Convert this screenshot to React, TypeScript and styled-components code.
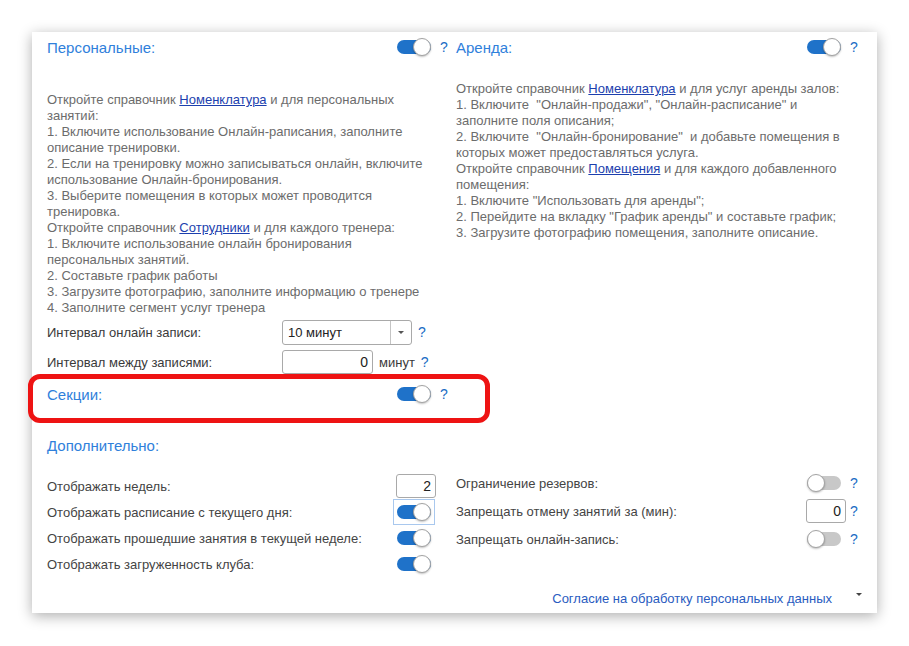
import React from "react";
import styled, { createGlobalStyle, css } from "styled-components";

const Global = createGlobalStyle`
  html, body { margin: 0; padding: 0; background: #ffffff; }
  body { font-family: "Liberation Sans", Arial, sans-serif; }
  * { box-sizing: border-box; }
`;

const Page = styled.div`
  padding: 32px 0 0 32px;
  width: 909px;
  height: 646px;
`;

const Card = styled.div`
  width: 845px;
  height: 581px;
  background: #fff;
  padding: 0 15px;
  box-shadow: 0 3px 13px rgba(0, 0, 0, 0.32);
  display: flex;
  flex-direction: column;
`;

const Columns = styled.div<{ $pad?: number }>`
  display: grid;
  grid-template-columns: 405px 406px;
  column-gap: 4px;
  align-items: start;
`;

const Column = styled.div<{ $padTop?: number }>`
  display: flex;
  flex-direction: column;
  padding-top: ${(p) => p.$padTop ?? 0}px;
`;

const HeaderRow = styled.div<{ $mt?: number; $highlight?: boolean }>`
  display: flex;
  align-items: center;
  height: 30px;
  margin-top: ${(p) => p.$mt ?? 0}px;
  position: relative;
  ${(p) =>
    p.$highlight &&
    css`
      &::before {
        content: "";
        position: absolute;
        left: -19px;
        right: -38px;
        top: -5px;
        bottom: -14px;
        border: 5px solid #ee1313;
        border-radius: 12px;
        pointer-events: none;
      }
    `}
`;

const Title = styled.div`
  flex: 1;
  font-size: 15px;
  color: #2f80db;
`;

const Desc = styled.div<{ $mt: number }>`
  margin-top: ${(p) => p.$mt}px;
  font-size: 13px;
  line-height: 16px;
  color: #6c6c6c;
`;

const Link = styled.a`
  color: #1c3fae;
  text-decoration: underline;
`;

const ControlSlot = styled.div`
  width: 40px;
  display: flex;
  align-items: center;
`;

const Help = styled.div`
  width: 16px;
  text-align: center;
  font-size: 14px;
  color: #1a6cc4;
`;

const ToggleBox = styled.div<{ $focus?: boolean }>`
  position: relative;
  width: 34px;
  height: 18px;
  margin-left: 1px;
  ${(p) =>
    p.$focus &&
    css`
      outline: 1px solid #a9c8ee;
      outline-offset: 3px;
    `}
`;

const Track = styled.div<{ $on: boolean }>`
  position: absolute;
  left: 0;
  right: 0;
  top: 2px;
  height: 14px;
  border-radius: 7px;
  background: ${(p) => (p.$on ? "#1f72c9" : "#c8c8c8")};
`;

const Knob = styled.div<{ $on: boolean }>`
  position: absolute;
  top: 0;
  ${(p) => (p.$on ? "right: 0;" : "left: 0;")}
  width: 18px;
  height: 18px;
  border-radius: 50%;
  background: #fff;
  border: 1px solid #a3a3a3;
  box-shadow: 0 1px 2px rgba(0, 0, 0, 0.25);
`;

const Toggle = ({ on, focus }: { on: boolean; focus?: boolean }) => (
  <ToggleBox $focus={focus}>
    <Track $on={on} />
    <Knob $on={on} />
  </ToggleBox>
);

const FieldRow = styled.div<{ $mt?: number }>`
  display: flex;
  align-items: center;
  height: 30px;
  margin-top: ${(p) => p.$mt ?? 0}px;
`;

const FieldLabel = styled.div`
  width: 235px;
  font-size: 13px;
  color: #3a3a3a;
`;

const Select = styled.div`
  width: 130px;
  height: 25px;
  border: 1px solid #a9a9a9;
  border-radius: 3px;
  display: flex;
  align-items: stretch;
  font-size: 13px;
  color: #222;
`;

const SelectValue = styled.div`
  flex: 1;
  display: flex;
  align-items: center;
  padding-left: 5px;
`;

const SelectButton = styled.div`
  width: 21px;
  border-left: 1px solid #c4c4c4;
  display: flex;
  align-items: center;
  justify-content: center;
  &::after {
    content: "";
    border-left: 3px solid transparent;
    border-right: 3px solid transparent;
    border-top: 3px solid #555;
  }
`;

const NumInput = styled.div<{ $w: number }>`
  width: ${(p) => p.$w}px;
  height: 24px;
  border: 1px solid #a9a9a9;
  border-radius: 3px;
  display: flex;
  align-items: center;
  justify-content: flex-end;
  padding-right: 4px;
  font-size: 14px;
  color: #222;
`;

const Unit = styled.div`
  font-size: 13px;
  color: #3a3a3a;
  margin-left: 6px;
`;

const InlineHelp = styled(Help)`
  width: auto;
  margin-left: 6px;
`;

const OptRow = styled.div<{ $h: number }>`
  display: flex;
  align-items: center;
  height: ${(p) => p.$h}px;
`;

const OptLabel = styled.div`
  flex: 1;
  font-size: 13px;
  color: #444;
`;

const Footer = styled.div`
  margin-top: auto;
  height: 25px;
  margin-bottom: 1px;
  display: flex;
  justify-content: flex-end;
  align-items: flex-start;
`;

const FooterLink = styled.div`
  font-size: 13px;
  color: #2a5cbf;
  padding-top: 4px;
`;

const Caret = styled.div`
  margin-left: 24px;
  margin-top: 6px;
  border-left: 3px solid transparent;
  border-right: 3px solid transparent;
  border-top: 3px solid #444;
`;

type Opt = { label: string; kind: "toggle" | "input"; on?: boolean; value?: string; focus?: boolean; help?: boolean };

const leftOpts: Opt[] = [
  { label: "Отображать недель:", kind: "input", value: "2" },
  { label: "Отображать расписание с текущего дня:", kind: "toggle", on: true, focus: true },
  { label: "Отображать прошедшие занятия в текущей неделе:", kind: "toggle", on: true },
  { label: "Отображать загруженность клуба:", kind: "toggle", on: true },
];

const rightOpts: Opt[] = [
  { label: "Ограничение резервов:", kind: "toggle", on: false, help: true },
  { label: "Запрещать отмену занятий за (мин):", kind: "input", value: "0", help: true },
  { label: "Запрещать онлайн-запись:", kind: "toggle", on: false, help: true },
];

const OptionRow = ({ o, h }: { o: Opt; h: number }) => (
  <OptRow $h={h}>
    <OptLabel>{o.label}</OptLabel>
    <ControlSlot>
      {o.kind === "toggle" ? <Toggle on={!!o.on} focus={o.focus} /> : <NumInput $w={40}>{o.value}</NumInput>}
    </ControlSlot>
    <Help>{o.help ? "?" : ""}</Help>
  </OptRow>
);

export default function App() {
  return (
    <>
      <Global />
      <Page>
        <Card>
          <Columns>
            <Column>
              <HeaderRow>
                <Title>Персональные:</Title>
                <ControlSlot>
                  <Toggle on />
                </ControlSlot>
                <Help>?</Help>
              </HeaderRow>
              <Desc $mt={30}>
                Откройте справочник <Link>Номенклатура</Link> и для персональных
                <br />
                занятий:
                <br />
                1. Включите использование Онлайн-раписания, заполните
                <br />
                описание тренировки.
                <br />
                2. Если на тренировку можно записываться онлайн, включите
                <br />
                использование Онлайн-бронирования.
                <br />
                3. Выберите помещения в которых может проводится
                <br />
                тренировка.
                <br />
                Откройте справочник <Link>Сотрудники</Link> и для каждого тренера:
                <br />
                1. Включите использование онлайн бронирования
                <br />
                персональных занятий.
                <br />
                2. Составьте график работы
                <br />
                3. Загрузите фотографию, заполните информацию о тренере
                <br />
                4. Заполните сегмент услуг тренера
              </Desc>
              <FieldRow $mt={1}>
                <FieldLabel>Интервал онлайн записи:</FieldLabel>
                <Select>
                  <SelectValue>10 минут</SelectValue>
                  <SelectButton />
                </Select>
                <InlineHelp>?</InlineHelp>
              </FieldRow>
              <FieldRow>
                <FieldLabel>Интервал между записями:</FieldLabel>
                <NumInput $w={91}>0</NumInput>
                <Unit>минут</Unit>
                <InlineHelp>?</InlineHelp>
              </FieldRow>
              <HeaderRow $mt={2} $highlight>
                <Title>Секции:</Title>
                <ControlSlot>
                  <Toggle on />
                </ControlSlot>
                <Help>?</Help>
              </HeaderRow>
            </Column>
            <Column>
              <HeaderRow>
                <Title>Аренда:</Title>
                <ControlSlot>
                  <Toggle on />
                </ControlSlot>
                <Help>?</Help>
              </HeaderRow>
              <Desc $mt={19}>
                Откройте справочник <Link>Номенклатура</Link> и для услуг аренды залов:
                <br />
                1. Включите &nbsp;"Онлайн-продажи", "Онлайн-расписание" и
                <br />
                заполните поля описания;
                <br />
                2. Включите &nbsp;"Онлайн-бронирование" &nbsp;и добавьте помещения в
                <br />
                которых может предоставляться услуга.
                <br />
                Откройте справочник <Link>Помещения</Link> и для каждого добавленного
                <br />
                помещения:
                <br />
                1. Включите "Использовать для аренды";
                <br />
                2. Перейдите на вкладку "График аренды" и составьте график;
                <br />
                3. Загрузите фотографию помещения, заполните описание.
              </Desc>
            </Column>
          </Columns>
          <HeaderRow $mt={21}>
            <Title>Дополнительно:</Title>
          </HeaderRow>
          <Columns style={{ marginTop: 9 }}>
            <Column $padTop={4}>
              {leftOpts.map((o) => (
                <OptionRow key={o.label} o={o} h={26} />
              ))}
            </Column>
            <Column>
              {rightOpts.map((o) => (
                <OptionRow key={o.label} o={o} h={28} />
              ))}
            </Column>
          </Columns>
          <Footer>
            <FooterLink>Согласие на обработку персональных данных</FooterLink>
            <Caret />
          </Footer>
        </Card>
      </Page>
    </>
  );
}
